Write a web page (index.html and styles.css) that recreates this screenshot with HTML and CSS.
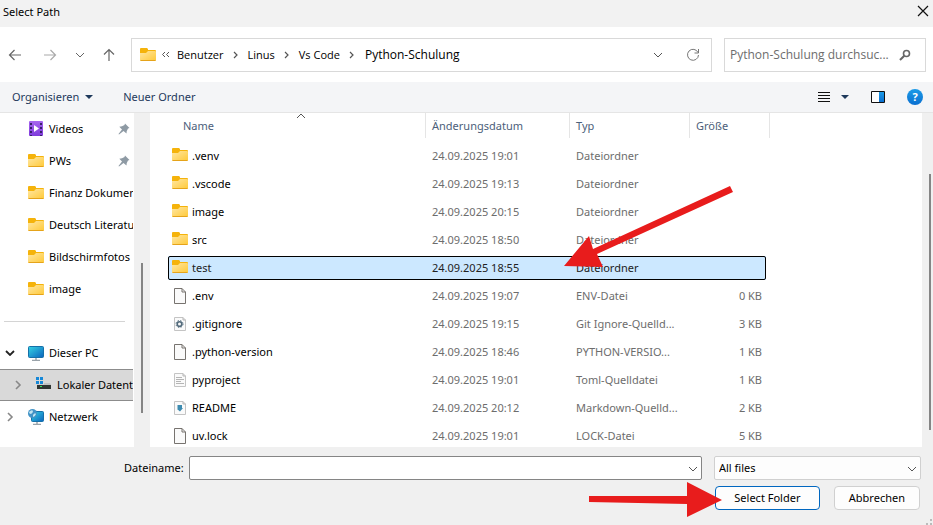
FILE: index.html
```html
<!DOCTYPE html>
<html lang="de">
<head>
<meta charset="utf-8">
<meta name="viewport" content="width=device-width, initial-scale=1">
<title>Select Path</title>
<link rel="stylesheet" href="styles.css">
</head>
<body>
<svg class="defs" aria-hidden="true">
  <defs>
    <linearGradient id="g-folder" x1="0" y1="0" x2="1" y2="1"><stop offset="0" stop-color="#ffe7a3"/><stop offset="1" stop-color="#ffc937"/></linearGradient>
    <linearGradient id="g-screen" x1="0" y1="0" x2="1" y2="1"><stop offset="0" stop-color="#35d3e4"/><stop offset="1" stop-color="#0b63bd"/></linearGradient>
    <linearGradient id="g-video" x1="0" y1="0" x2="0" y2="1"><stop offset="0" stop-color="#a766ee"/><stop offset="1" stop-color="#7f3bdc"/></linearGradient>
    <linearGradient id="g-help" x1="0" y1="0" x2="0" y2="1"><stop offset="0" stop-color="#1c9be8"/><stop offset="1" stop-color="#0a6fd0"/></linearGradient>
    <symbol id="folder" viewBox="0 0 16 14"><path d="M0 1Q0 0 1 0H7L8 1V2H15Q16 2 16 3V8H0Z" fill="#f5b30b"/><path d="M0 5H6L8 3H15Q16 3 16 4V12Q16 13 15 13H1Q0 13 0 12Z" fill="url(#g-folder)"/><path d="M.5 12.500H15.500" fill="none" stroke="#e5a31a"/></symbol>
    <symbol id="file" viewBox="0 0 12 16"><path d="M.5.500H8L11.500 4V15.500H.5Z" fill="#fafafa" stroke="#77736f"/><path d="M8 .5V4H11.500" fill="none" stroke="#77736f"/></symbol>
    <symbol id="doc" viewBox="0 0 12 16"><path d="M.5 1.500H9L11.500 4V14.500H.5Z" fill="#fafafa" stroke="#c4c4c4"/><path d="M9 1.500V4H11.500" fill="none" stroke="#b5b5b5"/></symbol>
    <symbol id="down" viewBox="0 0 10 6"><path d="M1 1L5 5L9 1" fill="none" stroke="currentColor"/></symbol>
    <symbol id="down-bold" viewBox="0 0 10 6"><path d="M1 1L5 5L9 1" fill="none" stroke="currentColor" stroke-width="1.800"/></symbol>
    <symbol id="right" viewBox="0 0 6 10"><path d="M1 1L5 5L1 9" fill="none" stroke="currentColor" stroke-width="1.600"/></symbol>
    <symbol id="crumb" viewBox="0 0 6 8"><path d="M1 1L4 4L1 7" fill="none" stroke="currentColor" stroke-width="1.200"/></symbol>
    <symbol id="caret" viewBox="0 0 8 4"><path d="M0 0H8L4 4Z" fill="currentColor"/></symbol>
    <symbol id="pin" viewBox="0 0 12 12"><path d="M7 .5L11.500 5L10 5.600L8.700 8.300L8.500 10.500L5.500 8L1 11.500L.5 11L4 6.500L1.300 3.800L4 3.200L6.500 2Z" fill="#8e9aa4"/></symbol>
  </defs>
</svg>
<main class="dialog">
  <header class="titlebar">
    <h1>Select Path</h1>
    <button class="plain close" aria-label="Schließen"><svg width="12" height="12" viewBox="0 0 12 12"><path d="M1 1L11 11M11 1L1 11" stroke="#111" stroke-width="1.200"/></svg></button>
  </header>

  <nav class="navbar" aria-label="Navigation">
    <div class="history">
      <button class="plain" aria-label="Zurück"><svg width="14" height="12" viewBox="0 0 14 12"><path d="M13 6H1.500M6.500 1L1.500 6L6.500 11" fill="none" stroke="#666" stroke-width="1.200"/></svg></button>
      <button class="plain" aria-label="Vorwärts"><svg width="14" height="12" viewBox="0 0 14 12"><path d="M1 6H12.500M7.500 1L12.500 6L7.500 11" fill="none" stroke="#aaa" stroke-width="1.200"/></svg></button>
      <button class="plain recent" aria-label="Verlauf"><svg width="10" height="6"><use href="#down"/></svg></button>
      <button class="plain" aria-label="Nach oben"><svg width="12" height="14" viewBox="0 0 12 14"><path d="M6 13V1.500M1 6.500L6 1.500L11 6.500" fill="none" stroke="#666" stroke-width="1.200"/></svg></button>
    </div>
    <div class="address">
      <svg class="place" width="16" height="14"><use href="#folder"/></svg>
      <svg class="more" width="9" height="7" viewBox="0 0 9 7"><path d="M4 1L1.500 3.500L4 6M8 1L5.500 3.500L8 6" fill="none" stroke="#555"/></svg>
      <a href="#">Benutzer</a><svg width="6" height="8"><use href="#crumb"/></svg>
      <a href="#">Linus</a><svg width="6" height="8"><use href="#crumb"/></svg>
      <a href="#">Vs Code</a><svg width="6" height="8"><use href="#crumb"/></svg>
      <a class="current" href="#">Python-Schulung</a>
      <button class="plain" aria-label="Adressliste"><svg width="10" height="6"><use href="#down"/></svg></button>
      <button class="plain reload" aria-label="Aktualisieren"><svg width="14" height="14" viewBox="0 0 14 14"><path d="M12 4.500A5.500 5.500 0 1 0 12.500 7M12.500 1V5H8.500" fill="none" stroke="#777"/></svg></button>
    </div>
    <div class="search">
      <input type="text" aria-label="Suchen" placeholder="Python-Schulung durchsuc...">
      <svg width="12" height="12" viewBox="0 0 12 12"><circle cx="7.500" cy="4.500" r="3" fill="none" stroke="#666" stroke-width="1.600"/><path d="M5.300 6.700L1 11" stroke="#666" stroke-width="2"/></svg>
    </div>
  </nav>

  <div class="toolbar">
    <button class="plain">Organisieren <svg width="8" height="4"><use href="#caret"/></svg></button>
    <button class="plain">Neuer Ordner</button>
    <span class="grow"></span>
    <button class="plain view" aria-label="Ansicht"><svg width="12" height="11" viewBox="0 0 12 11"><path d="M0 .5H12M0 3.500H12M0 6.500H12M0 9.500H12" stroke="#111"/></svg><svg width="8" height="4"><use href="#caret"/></svg></button>
    <button class="plain" aria-label="Vorschaufenster"><svg width="14" height="12" viewBox="0 0 14 12"><path d="M.5.500H13.500V11.500H.5Z" fill="#fff" stroke="#111"/><path d="M8 1H13V11H8Z" fill="url(#g-help)"/></svg></button>
    <button class="plain" aria-label="Hilfe"><span class="help">?</span></button>
  </div>

  <div class="browser">
    <nav class="tree" aria-label="Ordnerbereich">
      <a class="node" href="#"><svg class="icon" width="16" height="16" viewBox="0 0 16 16"><rect x="1" width="14" height="15" rx="1" fill="url(#g-video)"/><path d="M3 2V15M13 2V15" stroke="#39206b" stroke-width="2" stroke-dasharray="2 2"/><path d="M6 4L11 7.500L6 11Z" fill="#fff"/></svg><span>Videos</span><svg class="pin" width="12" height="12"><use href="#pin"/></svg></a>
      <a class="node" href="#"><svg class="icon" width="16" height="14"><use href="#folder"/></svg><span>PWs</span><svg class="pin" width="12" height="12"><use href="#pin"/></svg></a>
      <a class="node" href="#"><svg class="icon" width="16" height="14"><use href="#folder"/></svg><span>Finanz Dokumente</span></a>
      <a class="node" href="#"><svg class="icon" width="16" height="14"><use href="#folder"/></svg><span>Deutsch Literatur</span></a>
      <a class="node" href="#"><svg class="icon" width="16" height="14"><use href="#folder"/></svg><span>Bildschirmfotos</span></a>
      <a class="node" href="#"><svg class="icon" width="16" height="14"><use href="#folder"/></svg><span>image</span></a>
      <hr>
      <a class="node top" href="#"><svg class="twist open" width="10" height="6"><use href="#down-bold"/></svg><svg class="icon" width="16" height="16" viewBox="0 0 16 16"><rect x=".5" y="1.500" width="15" height="11" rx="1" fill="url(#g-screen)" stroke="#1670a8"/><path d="M8 13V15M4 15.500H12" stroke="#9aa3aa" stroke-width="1.500"/></svg><span>Dieser PC</span></a>
      <a class="node child selected" href="#"><svg class="twist" width="6" height="10"><use href="#right"/></svg><svg class="icon" width="16" height="16" viewBox="0 0 16 16"><path d="M0 0H3V3H0ZM4 0H7V3H4ZM0 4H3V7H0ZM4 4H7V7H4Z" fill="#1688d8"/><path d="M8 6H14L15 8H1V7.500H8Z" fill="#c2c2c2"/><rect x="1" y="8" width="14" height="4" fill="#303633"/><rect x="4" y="9" width="2" height="1" fill="#37e55a"/></svg><span>Lokaler Datenträger</span></a>
      <a class="node top" href="#"><svg class="twist" width="6" height="10"><use href="#right"/></svg><svg class="icon" width="16" height="16" viewBox="0 0 16 16"><rect x="3.500" y="2.500" width="12" height="10" rx="1" fill="url(#g-screen)" stroke="#1670a8"/><path d="M9 13V15M5 15.500H13" stroke="#9aa3aa" stroke-width="1.500"/><circle cx="4.500" cy="4.500" r="4.500" fill="#4293c6"/><path d="M1 3Q4 0 5 2Q5 4 3 5Q1 5 1 3ZM5 6Q7 3 8 5Q7 8 5 8Z" fill="#c2e5f2"/></svg><span>Netzwerk</span></a>
    </nav>
    <div class="gutter"><span class="thumb"></span></div>
    <section class="files">
      <svg class="sort" width="10" height="6" viewBox="0 0 10 6"><path d="M1 5L5 1L9 5" fill="none" stroke="#555"/></svg>
      <table>
        <colgroup><col class="c-name"><col class="c-date"><col class="c-type"><col class="c-size"></colgroup>
        <thead><tr><th><span>Name</span></th><th><span>Änderungsdatum</span></th><th><span>Typ</span></th><th><span class="last">Größe</span></th></tr></thead>
        <tbody>
          <tr><td><svg class="fold" width="16" height="14"><use href="#folder"/></svg>.venv</td><td>24.09.2025 19:01</td><td>Dateiordner</td><td></td></tr>
          <tr><td><svg class="fold" width="16" height="14"><use href="#folder"/></svg>.vscode</td><td>24.09.2025 19:13</td><td>Dateiordner</td><td></td></tr>
          <tr><td><svg class="fold" width="16" height="14"><use href="#folder"/></svg>image</td><td>24.09.2025 20:15</td><td>Dateiordner</td><td></td></tr>
          <tr><td><svg class="fold" width="16" height="14"><use href="#folder"/></svg>src</td><td>24.09.2025 18:50</td><td>Dateiordner</td><td></td></tr>
          <tr class="selected"><td><svg class="fold" width="16" height="14"><use href="#folder"/></svg>test</td><td>24.09.2025 18:55</td><td>Dateiordner</td><td></td></tr>
          <tr><td><svg width="16" height="16"><use href="#file"/></svg>.env</td><td>24.09.2025 19:07</td><td>ENV-Datei</td><td>0 KB</td></tr>
          <tr><td><svg width="16" height="16" viewBox="-2 0 16 16"><use href="#doc" width="12" height="16"/><circle cx="5.500" cy="8" r="2.300" fill="none" stroke="#536b7c" stroke-width="1.600"/><circle cx="5.500" cy="8" r="3.500" fill="none" stroke="#536b7c" stroke-dasharray="1.400 1.400"/></svg>.gitignore</td><td>24.09.2025 19:15</td><td>Git Ignore-Quelld...</td><td>3 KB</td></tr>
          <tr><td><svg width="16" height="16"><use href="#file"/></svg>.python-version</td><td>24.09.2025 18:46</td><td>PYTHON-VERSIO...</td><td>1 KB</td></tr>
          <tr><td><svg width="16" height="16" viewBox="-2 0 16 16"><use href="#doc" width="12" height="16"/><path d="M2 5.500H8M2 7.500H10M2 9.500H7M2 11.500H10" stroke="#b5b5b5"/></svg>pyproject</td><td>24.09.2025 19:01</td><td>Toml-Quelldatei</td><td>1 KB</td></tr>
          <tr><td><svg width="16" height="16" viewBox="-2 0 16 16"><use href="#doc" width="12" height="16"/><path d="M3.500 5H8V8H9L6 11.500L3 9H3.500Z" fill="#3d8bb0"/></svg>README</td><td>24.09.2025 20:12</td><td>Markdown-Quelld...</td><td>2 KB</td></tr>
          <tr><td><svg width="16" height="16"><use href="#file"/></svg>uv.lock</td><td>24.09.2025 19:01</td><td>LOCK-Datei</td><td>5 KB</td></tr>
        </tbody>
      </table>
    </section>
    <div class="scroll"><span class="thumb"></span></div>
  </div>

  <form class="footer">
    <label for="filename">Dateiname:</label>
    <div class="combo filename"><input id="filename" type="text"><svg width="10" height="6"><use href="#down"/></svg></div>
    <div class="right">
      <div class="combo filter"><select aria-label="Dateityp"><option>All files</option></select><svg width="10" height="6"><use href="#down"/></svg></div>
      <div class="actions"><button type="button" class="btn primary">Select Folder</button><button type="button" class="btn">Abbrechen</button></div>
    </div>
    <svg class="grip" width="6" height="6" viewBox="0 0 6 6"><path d="M4 0H6V2H4ZM0 4H2V6H0ZM4 4H6V6H4Z" fill="#bbb"/></svg>
  </form>

  <svg class="marker row-marker" width="170" height="84" viewBox="0 0 170 84" aria-hidden="true"><path d="M166 2L169 8L33 70L39 83L0 82L25 52L29 65Z" fill="#e81c1c"/></svg>
  <svg class="marker button-marker" width="134" height="36" viewBox="0 0 134 36" aria-hidden="true"><path d="M0 14H98V0L133 18L98 35V22L0 20Z" fill="#e81c1c"/></svg>
</main>
</body>
</html>
```
FILE: styles.css
```css
* { box-sizing: border-box; }
body {
  margin: 0;
  background: #f0f0f0;
  color: #000;
  font: 12px/16px "Noto Sans", "Open Sans", sans-serif;
}
svg { display: block; flex: none; }
a { color: inherit; text-decoration: none; }
button, input, select { font: inherit; color: inherit; }
.defs { position: absolute; width: 0; height: 0; }
.plain { display: flex; align-items: center; border: 0; padding: 0; background: none; }
.grow { flex: 1; }

.dialog { position: relative; display: flex; flex-direction: column; height: 100vh; overflow: hidden; }

.titlebar { display: flex; justify-content: space-between; height: 27px; padding: 4px 4px 0 3px; background: #f2f2f2; }
.titlebar h1 { margin: 0; font-size: 11px; font-weight: 400; line-height: 16px; }
.close { height: 14px; }

.navbar { display: flex; align-items: center; height: 55px; padding: 0 7px 0 8px; background: #fff; font-family: "Open Sans", "Noto Sans", sans-serif; }
.history { display: flex; align-items: center; gap: 21px; width: 123px; color: #666; }
.recent { margin: 0 -3px; }
.address, .search { display: flex; align-items: center; height: 34px; border: 1px solid #d9d9d9; }
.address { flex: 1; gap: 9px; padding: 0 11px 0 8px; color: #555; font-size: 11px; }
.address a { color: #000; }
.address .current { flex: 1; margin-left: 1px; font-size: 12px; }
.more { margin: 0 -2px 0 -4px; }
.reload { margin-left: 14px; }
.search { width: 202px; margin-left: 12px; padding: 0 14px 0 5px; }
.search input { flex: 1; min-width: 0; padding: 0; border: 0; outline: 0; background: none; }
.search input::placeholder { color: #6d6d6d; opacity: 1; }

.toolbar { display: flex; align-items: center; gap: 22px; height: 31px; padding: 0 10px 0 12px; border-bottom: 1px solid #e5e5e5; background: #f4f5f7; color: #1e395b; font-size: 11px; }
.toolbar button { gap: 6px; }
.toolbar button:nth-child(2) { margin-left: 8px; }
.toolbar .view { gap: 11px; }
.help { width: 16px; height: 16px; border-radius: 50%; background: linear-gradient(#1c9be8, #0a6fd0); color: #fff; font-weight: 700; text-align: center; }

.browser { display: flex; flex: 1; min-height: 0; background: #fff; }
.tree { width: 134px; padding-right: 1px; overflow: hidden; }
.node { display: flex; align-items: center; height: 32px; padding-left: 28px; white-space: nowrap; overflow: hidden; font-size: 11px; }
.node .icon { margin-right: 5px; }
.node .pin { margin: 0 3px 0 auto; }
.node.top { padding-left: 0; }
.node.child { padding-left: 8px; }
.twist { width: 20px; margin-right: 8px; color: #888; }
.twist.open { color: #222; }
.tree .selected { border: solid #8c8c8c; border-width: 1px 0; background: #d9d9d9; }
.tree hr { height: 1px; margin: 16px 8px 15px 4px; border: 0; background: #d4d4d4; }
.gutter { width: 16px; padding: 150px 0 34px 7px; background: #f0f0f0; }
.scroll { width: 11px; padding: 61px 0 17px 7px; background: #f0f0f0; }
.thumb { display: block; width: 2px; height: 100%; background: #858585; }

.files { position: relative; flex: 1; min-width: 0; padding-left: 18px; overflow: hidden; }
.sort { position: absolute; top: 0; left: 146px; }
table { width: 598px; margin-top: -4px; border-spacing: 0 4px; table-layout: fixed; font-size: 11px; }
.c-name { width: 257px; }
.c-date { width: 144px; }
.c-type { width: 120px; }
.c-size { width: 77px; }
th, td { padding: 0; text-align: left; font-weight: 400; white-space: nowrap; }
th { height: 27px; vertical-align: top; color: #4c607a; }
th span { display: block; height: 25px; padding-left: 6px; border-left: 1px solid #e5e5e5; line-height: 26px; }
th:first-child span { padding-left: 15px; border-left: 0; }
th .last { width: 81px; border-right: 1px solid #e5e5e5; }
td { height: 24px; padding-left: 7px; color: #6d6d6d; }
td:first-child { display: flex; align-items: center; gap: 4px; padding-left: 4px; color: #000; }
td:last-child { padding-right: 4px; text-align: right; }
.fold { margin-bottom: 2px; }
tbody .selected { outline: 1px solid #000; outline-offset: -1px; border-radius: 2px; }
tbody .selected td { background: #cce8ff; color: #222; }

.footer { position: relative; display: flex; height: 78px; padding: 9px 12px 0 124px; }
.footer label { width: 65px; padding-top: 4px; font-size: 11px; }
.combo { position: relative; height: 24px; }
.combo svg { position: absolute; top: 10px; right: 4px; color: #555; pointer-events: none; }
.combo input, .combo select { width: 100%; height: 100%; padding: 0 18px 0 4px; border: 1px solid #858585; border-radius: 2px; background: #fff; appearance: none; font-size: 11px; }
.combo select { border-color: #d0d0d0; background: #fdfdfd; }
.filename { flex: 1; }
.right { width: 207px; margin-left: 12px; }
.actions { display: flex; gap: 14px; padding: 6px 1px; }
.btn { flex: 86; height: 24px; padding: 0; border: 1px solid #d0d0d0; border-radius: 4px; background: #fdfdfd; font-size: 11px; }
.primary { flex: 105; border-color: #0067c0; }
.grip { position: absolute; right: 1px; bottom: 0; }

.marker { position: absolute; pointer-events: none; }
.row-marker { left: 564px; top: 184px; }
.button-marker { right: 210px; bottom: 7px; }
```
